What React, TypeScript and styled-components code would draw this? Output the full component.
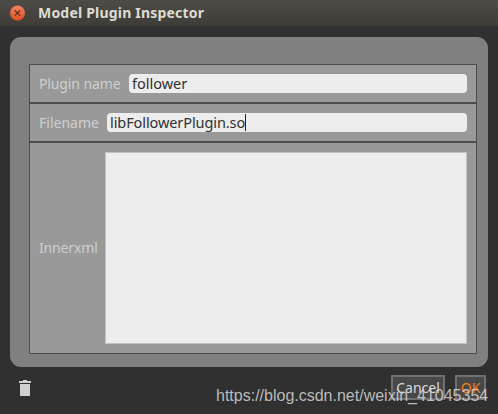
import React from 'react';
import styled, { createGlobalStyle } from 'styled-components';

const GlobalStyle = createGlobalStyle`
  * { box-sizing: border-box; }
  body {
    margin: 0;
    background: #303030;
    font-family: "Noto Sans", "Open Sans", sans-serif;
    overflow: hidden;
  }
`;

const Window = styled.main`
  position: relative;
  display: flex;
  flex-direction: column;
  width: 498px;
  height: 414px;
  background: #303030;
`;

const TitleBar = styled.header`
  display: flex;
  align-items: center;
  flex: none;
  gap: 13px;
  height: 26px;
  padding: 0 0 1px 9px;
  background: linear-gradient(#4d4c46, #3d3c37);
`;

const CloseButton = styled.button`
  display: flex;
  width: 16px;
  height: 16px;
  padding: 0;
  border: 0;
  background: none;
`;

const Title = styled.h1`
  margin: 0;
  color: #dfdbd2;
  font-size: 14px;
  line-height: 20px;
  font-weight: 700;
  letter-spacing: 0.2px;
  white-space: nowrap;
`;

const Panel = styled.section`
  flex: none;
  height: 330px;
  margin: 11px 10px 0;
  padding: 27px 11px 13px 19px;
  border-radius: 11px;
  background: #808080;
`;

const Row = styled.label<{ $height: number }>`
  display: flex;
  align-items: center;
  gap: 8px;
  height: ${(p) => p.$height}px;
  padding: 9px;
  border: 1px solid #4d4d4d;
  background: #999999;
`;

const Label = styled.span<{ $width: number; $spacing: number; $lift?: number }>`
  flex: none;
  width: ${(p) => p.$width}px;
  padding-bottom: ${(p) => p.$lift ?? 0}px;
  color: #cfcfcf;
  font-size: 14px;
  line-height: 19px;
  letter-spacing: ${(p) => p.$spacing}px;
  white-space: nowrap;
`;

const Field = styled.div<{ $spacing: number }>`
  display: flex;
  align-items: center;
  flex: 1;
  height: 19px;
  padding-left: 3px;
  border-radius: 4px;
  background: #ededed;
  color: #303030;
  font-size: 14.5px;
  line-height: 19px;
  letter-spacing: ${(p) => p.$spacing}px;
`;

const Caret = styled.span`
  width: 1px;
  height: 17px;
  background: #222;
`;

const TextArea = styled.textarea`
  flex: 1;
  height: 192px;
  margin: 0 0 0 -1px;
  border: 1px solid #c2c2be;
  border-radius: 0;
  background: #ededed;
  resize: none;
`;

const Footer = styled.footer`
  display: flex;
  flex: none;
  gap: 10px;
  height: 47px;
  padding: 8px 12px 0 19px;
`;

const DeleteButton = styled.button`
  display: flex;
  width: 12px;
  height: 17px;
  margin: 5px auto 0 0;
  padding: 0;
  border: 0;
  background: none;
`;

const Button = styled.button<{ $width: number; $primary?: boolean }>`
  width: ${(p) => p.$width}px;
  height: 25px;
  padding: 0;
  border: 2px solid #707070;
  background: #484848;
  color: ${(p) => (p.$primary ? '#f58113' : '#dadada')};
  font: 14px/21px "Noto Sans", sans-serif;
  letter-spacing: ${(p) => (p.$primary ? -0.1 : 0)}px;
  white-space: nowrap;
`;

const Watermark = styled.span`
  position: absolute;
  top: 386px;
  left: 216px;
  color: rgba(214, 214, 214, 0.85);
  font: 16px/20px "Liberation Sans", Arial, sans-serif;
  white-space: nowrap;
`;

export default function App() {
  return (
    <Window>
      <GlobalStyle />
      <TitleBar>
        <CloseButton aria-label="Close">
          <svg width="16" height="16" viewBox="0 0 16 16">
            <defs>
              <linearGradient id="close" x2="0" y2="1">
                <stop offset="0" stopColor="#f58363" />
                <stop offset="1" stopColor="#e24f20" />
              </linearGradient>
            </defs>
            <circle cx="8.5" cy="8" r="7.5" fill="url(#close)" />
            <path d="M5.8 5.4l5.4 5.2M11.2 5.4l-5.4 5.2" stroke="#55301f" strokeWidth="1.3" />
          </svg>
        </CloseButton>
        <Title>Model Plugin Inspector</Title>
      </TitleBar>
      <Panel>
        <Row $height={39}>
          <Label $width={82} $spacing={-0.12}>Plugin name</Label>
          <Field $spacing={0}>follower</Field>
        </Row>
        <Row $height={39}>
          <Label $width={60} $spacing={0}>Filename</Label>
          <Field $spacing={-0.09}>
            libFollowerPlugin.so
            <Caret />
          </Field>
        </Row>
        <Row $height={212}>
          <Label $width={59} $spacing={-0.15} $lift={2}>Innerxml</Label>
          <TextArea aria-label="Innerxml" />
        </Row>
      </Panel>
      <Footer>
        <DeleteButton aria-label="Delete">
          <svg width="12" height="17" viewBox="0 0 12 17">
            <path d="M4 0h4v1h4v2H0V1h4zM1 4h10v12H1z" fill="#d0d0d0" />
          </svg>
        </DeleteButton>
        <Button $width={54}>Cancel</Button>
        <Button $width={31} $primary>OK</Button>
      </Footer>
      <Watermark>https://blog.csdn.net/weixin_41045354</Watermark>
    </Window>
  );
}
